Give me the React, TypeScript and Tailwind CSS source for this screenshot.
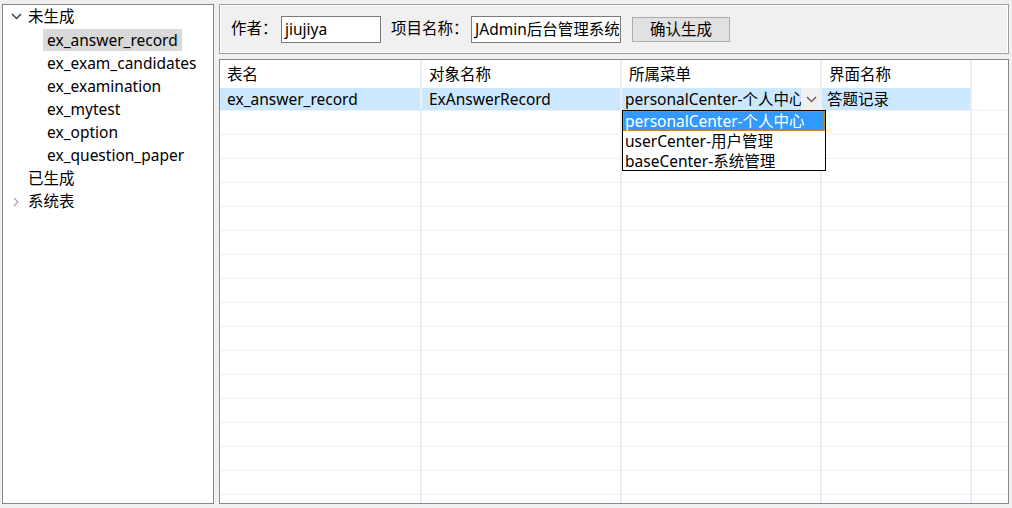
import { useState } from 'react'

const font = { fontFamily: '"Noto Sans", "Noto Sans CJK SC", sans-serif' }

const tables = [
  'ex_answer_record',
  'ex_exam_candidates',
  'ex_examination',
  'ex_mytest',
  'ex_option',
  'ex_question_paper',
]

const menus = ['personalCenter-个人中心', 'userCenter-用户管理', 'baseCenter-系统管理']

function ChevronDown({ className }: { className?: string }) {
  return (
    <svg width="11" height="7" viewBox="0 0 11 7" className={className}>
      <path d="M1 1 L5.5 5.5 L10 1" fill="none" stroke="currentColor" strokeWidth="1.5" />
    </svg>
  )
}

function ChevronRight({ className }: { className?: string }) {
  return (
    <svg width="6" height="10" viewBox="0 0 6 10" className={className}>
      <path d="M1 1 L5 5 L1 9" fill="none" stroke="currentColor" strokeWidth="1.2" />
    </svg>
  )
}

function Tree() {
  const [selected, setSelected] = useState('ex_answer_record')
  return (
    <div className="w-[212px] h-[500px] border border-[#828790] bg-white text-[15.5px] text-black leading-[23px]">
      <div className="flex items-center h-[23px]">
        <span className="w-[25px] flex justify-center pl-[2px] text-[#404040]">
          <ChevronDown />
        </span>
        <span>未生成</span>
      </div>
      {tables.map((t) => (
        <div key={t} className="h-[23px] pl-[40px] flex items-center">
          <span
            onClick={() => setSelected(t)}
            className={`px-[4px] h-[22px] leading-[22px] cursor-default ${selected === t ? 'bg-[#d9d9d9]' : ''}`}
          >
            {t}
          </span>
        </div>
      ))}
      <div className="flex items-center h-[24px] pl-[25px]">已生成</div>
      <div className="flex items-center h-[23px]">
        <span className="w-[25px] flex justify-center pl-[1px] text-[#a6a6a6]">
          <ChevronRight />
        </span>
        <span>系统表</span>
      </div>
    </div>
  )
}

function Toolbar() {
  return (
    <div className="h-[50px] border border-[#a0a0a0] shadow-[inset_1px_1px_0_#ffffff,inset_-1px_-1px_0_#ffffff] bg-[#f0f0f0] flex items-center pl-[11px] text-[15.5px] text-black">
      <span className="w-[50px]">作者：</span>
      <div className="w-[100px] h-[27px] border border-[#7a7a7a] bg-white pl-[3px] leading-[25px] overflow-hidden whitespace-nowrap">
        jiujiya
      </div>
      <span className="ml-[10px] w-[80px]">项目名称：</span>
      <div className="w-[150px] h-[27px] border border-[#7a7a7a] bg-white pl-[3px] leading-[25px] overflow-hidden whitespace-nowrap">
        JAdmin后台管理系统
      </div>
      <button className="ml-[11px] w-[98px] h-[25px] border border-[#adadad] bg-[#e1e1e1] text-center leading-[23px]">
        确认生成
      </button>
    </div>
  )
}

function Grid() {
  const cols = ['w-[202px]', 'w-[200px]', 'w-[200px]', 'w-[150px]']
  const emptyRows = Array.from({ length: 17 })
  return (
    <div className="relative h-[445px] border border-[#828790] bg-white text-[15.5px] text-black overflow-hidden">
      {/* header */}
      <div className="flex h-[28px]">
        {['表名', '对象名称', '所属菜单', '界面名称'].map((h, i) => (
          <div key={h} className={`${cols[i]} border-r-2 border-[#eaeff7] pl-[7px] leading-[28px]`}>
            {h}
          </div>
        ))}
        <div className="flex-1" />
      </div>
      {/* data row */}
      <div className="flex h-[23px] border-b border-[#f0f0f0]">
        <div className={`${cols[0]} bg-[#cce8ff] border-r-2 border-[#eaeff7] pl-[7px] leading-[22px]`}>ex_answer_record</div>
        <div className={`${cols[1]} bg-[#cce8ff] border-r-2 border-[#eaeff7] pl-[7px] leading-[22px]`}>ExAnswerRecord</div>
        <div className={`${cols[2]} bg-[#cce8ff] flex h-[22px]`}>
          <div className="flex-1 pl-[3px] leading-[22px] overflow-hidden whitespace-nowrap">personalCenter-个人中心</div>
          <div className="w-[21px] bg-[#f0f0f0] flex items-center justify-center text-[#606060]">
            <ChevronDown />
          </div>
        </div>
        <div className={`${cols[3]} bg-[#cce8ff] border-r-2 border-[#eaeff7] pl-[5px] leading-[22px]`}>答题记录</div>
        <div className="flex-1" />
      </div>
      {emptyRows.map((_, r) => (
        <div key={r} className="flex h-[24px] border-b border-[#f0f0f0]">
          {cols.map((c, i) => (
            <div key={i} className={`${c} border-r-2 border-[#eaeff7]`} />
          ))}
          <div className="flex-1" />
        </div>
      ))}
      {/* dropdown list */}
      <div className="absolute left-[402px] top-[50px] w-[204px] h-[61px] border border-black bg-white leading-[20px]">
        {menus.map((m, i) => (
          <div
            key={m}
            className={`h-[20px] pl-[2px] whitespace-nowrap ${i === 0 ? 'bg-[#3399ff] text-white outline-1 outline-dotted outline-[#d88a3a] -outline-offset-1' : ''}`}
          >
            {m}
          </div>
        ))}
      </div>
    </div>
  )
}

export default function App() {
  return (
    <div className="w-[1012px] h-[508px] bg-[#f0f0f0] flex pt-[4px] pl-[2px] overflow-hidden" style={font}>
      <Tree />
      <div className="ml-[5px] w-[790px] flex flex-col gap-[5px]">
        <Toolbar />
        <Grid />
      </div>
    </div>
  )
}
